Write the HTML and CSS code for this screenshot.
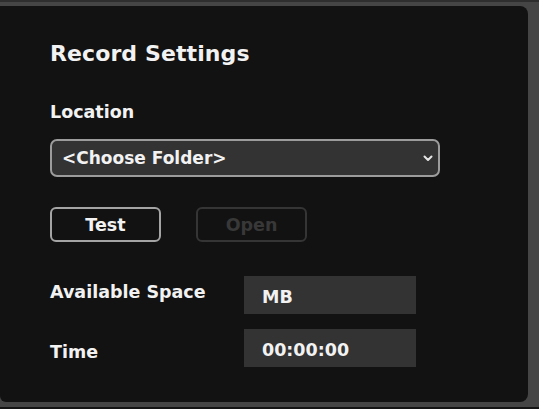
FILE: index.html
```html
<!DOCTYPE html>
<html>
<head>
<meta charset="utf-8">
<link rel="stylesheet" href="styles.css">
</head>
<body>
<div class="frame">
  <section class="panel">
    <h1 class="title">Record Settings</h1>
    <div class="label loc">Location</div>
    <div class="select">
      <span>&lt;Choose Folder&gt;</span>
      <svg class="chev" width="10" height="7" viewBox="0 0 10 7"><path d="M1.5 1.5 L5 5 L8.5 1.5" fill="none" stroke="#e6e6e6" stroke-width="2" stroke-linecap="round" stroke-linejoin="round"/></svg>
    </div>
    <div class="buttons">
      <div class="btn">Test</div>
      <div class="btn disabled">Open</div>
    </div>
    <div class="row first">
      <div class="label rl">Available Space</div>
      <div class="box">MB</div>
    </div>
    <div class="row second">
      <div class="label rl">Time</div>
      <div class="box">00:00:00</div>
    </div>
  </section>
  <div class="below"></div>
</div>
</body>
</html>
```
FILE: styles.css
```css
html, body {
  margin: 0;
  padding: 0;
}
body {
  background: #454545;
  width: 539px;
  height: 409px;
  overflow: hidden;
  font-family: "DejaVu Sans", "Open Sans", sans-serif;
  color: #f2f2f2;
}
.frame {
  border-top: 2px solid #2e2e2e;
  padding-top: 4px;
  padding-right: 11px;
}
.panel {
  box-sizing: border-box;
  width: 528px;
  height: 396px;
  background: #121212;
  border-radius: 0 8px 8px 6px;
  padding: 36px 0 0 50px;
}
.below {
  margin-top: 5px;
  height: 10px;
  background: #141414;
  margin-right: -11px;
}
.title {
  margin: 0;
  font-size: 22px;
  font-weight: bold;
  line-height: 24px;
  letter-spacing: 0.1px;
}
.label {
  font-size: 17.5px;
  font-weight: bold;
  line-height: 20px;
}
.loc {
  margin-top: 36px;
}
.select {
  box-sizing: border-box;
  margin-top: 17px;
  width: 390px;
  height: 38px;
  background: #333333;
  border: 2px solid #9c9c9c;
  border-radius: 7px;
  display: flex;
  align-items: center;
  justify-content: space-between;
  padding: 0 5px 0 10px;
  font-size: 17px;
  font-weight: bold;
}
.buttons {
  display: flex;
  gap: 35px;
  margin-top: 30px;
}
.btn {
  box-sizing: border-box;
  width: 111px;
  height: 35px;
  border: 2px solid #a4a4a4;
  border-radius: 6px;
  background: #121212;
  display: flex;
  align-items: center;
  justify-content: center;
  font-size: 17.5px;
  font-weight: bold;
}
.btn.disabled {
  border-color: #353535;
  color: #383838;
}
.row {
  display: flex;
  align-items: flex-start;
}
.row.first {
  margin-top: 34px;
}
.row.second {
  margin-top: 15px;
}
.row .rl {
  width: 194px;
  padding-top: 6px;
}
.row.second .rl {
  padding-top: 13px;
}
.box {
  box-sizing: border-box;
  width: 172px;
  height: 38px;
  background: #333333;
  display: flex;
  align-items: center;
  padding: 3px 0 0 18px;
  font-size: 17.5px;
  font-weight: bold;
}
```
